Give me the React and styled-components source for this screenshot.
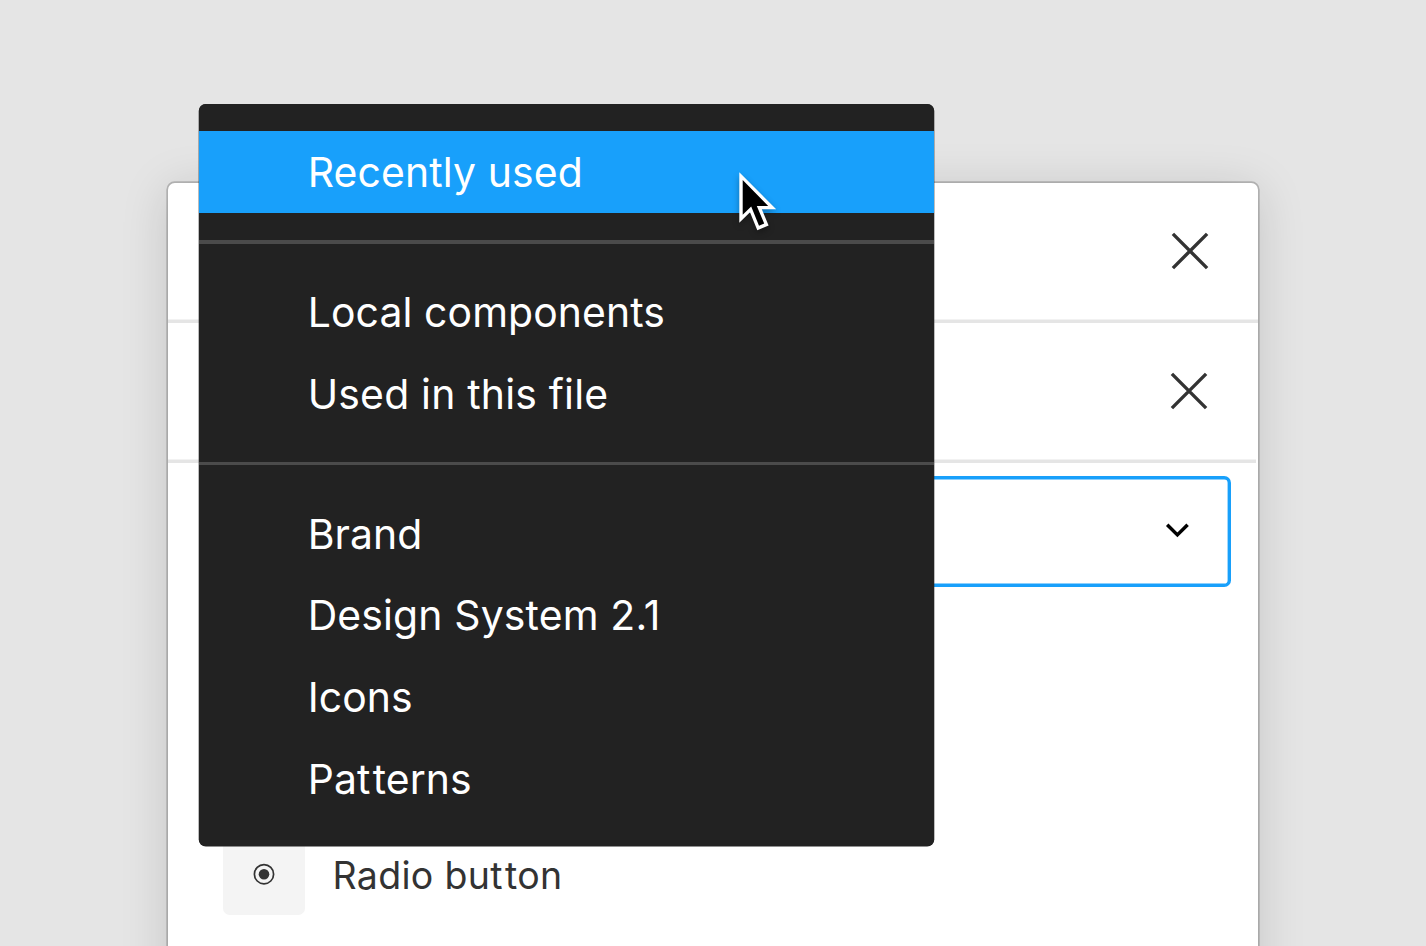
import React from "react";
import styled, { createGlobalStyle } from "styled-components";

const GlobalStyle = createGlobalStyle`
  * { box-sizing: border-box; }
  html, body { margin: 0; padding: 0; background: #e5e5e5; }
  body { overflow: hidden; font-family: Inter, "Liberation Sans", sans-serif; }
`;

const Stage = styled.main`
  position: relative;
  width: 1426px;
  height: 946px;
  overflow: hidden;
  padding: 183.2px 0 0 168.2px;
  background: #e5e5e5;
`;

const Panel = styled.section`
  display: flex;
  flex-direction: column;
  width: 1089.8px;
  height: 1100px;
  background: #fff;
  border-radius: 6.8px;
  box-shadow: 0 0 0 1.7px rgba(0, 0, 0, 0.2), 0 6.8px 47.7px rgba(0, 0, 0, 0.15);
`;

const PanelRow = styled.header`
  display: flex;
  flex: none;
  align-items: center;
  justify-content: flex-end;
  height: 139.7px;
  margin-right: ${(p) => p.$inset || 0}px;
  padding: 0 ${(p) => p.$pad}px 4.4px 0;
  box-shadow: inset 0 -3.4px 0 #e5e5e5;
`;

const Icon = styled.svg`
  display: block;
  flex: none;
`;

const Select = styled.div`
  display: flex;
  flex: none;
  align-items: center;
  justify-content: flex-end;
  height: 110.5px;
  margin: 13.6px 27.3px 0 54.7px;
  padding: 0 41.8px 2.6px 0;
  border-radius: 6.8px;
  box-shadow: inset 0 0 0 3.4px #18a0fb;
`;

const ComponentRow = styled.div`
  display: flex;
  align-items: center;
  gap: 27.6px;
  margin: 246.6px 0 0 54.7px;
`;

const Thumb = styled.div`
  display: flex;
  align-items: center;
  justify-content: center;
  width: 82px;
  height: 82px;
  border-radius: 6.8px;
  background: #f4f4f4;
`;

const ComponentName = styled.span`
  padding-top: 3.4px;
  color: #333;
  font-size: 37.5px;
  line-height: 54.5px;
  letter-spacing: 0.33px;
`;

const Menu = styled.nav`
  position: absolute;
  left: 199px;
  top: 104px;
  width: 735px;
  padding: 27.3px 0 26.2px;
  background: #222;
  border-radius: 6.8px;
  box-shadow: 0 0.3px 0 0.3px #222;
`;

const MenuItem = styled.div`
  height: 81.8px;
  padding-left: 108.7px;
  background: ${(p) => (p.$active ? "#18a0fb" : "transparent")};
  color: #fff;
  font-size: 40.9px;
  line-height: 83.4px;
  letter-spacing: ${(p) => p.$tracking || 0.1}px;
  white-space: nowrap;
`;

const WideT = styled.span`
  letter-spacing: 2.3px;
`;

const Divider = styled.div`
  height: 3.4px;
  margin: 27.3px 0;
  box-shadow: inset 0 0 0 3.4px #4b4b4b;
`;

const Cursor = styled.svg`
  position: absolute;
  left: 730px;
  top: 164px;
  filter: drop-shadow(0 3px 3px rgba(0, 0, 0, 0.3));
`;

const CloseIcon = () => (
  <Icon width="38" height="38" viewBox="0 0 38 38" fill="none" stroke="#333" strokeWidth="3.4">
    <path d="M1.9 1.9 36.1 36.1M36.1 1.9 1.9 36.1" />
  </Icon>
);

const Label = ({ text }) => {
  const at = text.indexOf("tt");
  if (at < 0) return text;
  return (
    <>
      {text.slice(0, at)}
      <WideT>t</WideT>
      {text.slice(at + 1)}
    </>
  );
};

const groups = [
  [{ label: "Recently used", active: true, tracking: 0.13 }],
  [{ label: "Local components" }, { label: "Used in this file", tracking: 0.2 }],
  [
    { label: "Brand" },
    { label: "Design System 2.1", tracking: 0.15 },
    { label: "Icons" },
    { label: "Patterns" },
  ],
];

export default function App() {
  return (
    <>
      <GlobalStyle />
      <Stage>
        <Panel>
          <PanelRow $pad={49}>
            <CloseIcon />
          </PanelRow>
          <PanelRow $pad={47.9} $inset={2}>
            <CloseIcon />
          </PanelRow>
          <Select>
            <Icon width="24" height="16" viewBox="0 0 24 16" fill="none" stroke="#000" strokeWidth="3.5">
              <path d="M2.2 2.7 12.4 12.9 22.6 2.7" />
            </Icon>
          </Select>
          <ComponentRow>
            <Thumb>
              <Icon width="24" height="24" viewBox="0 0 24 24">
                <circle cx="12" cy="12.2" r="9.6" fill="none" stroke="#333" strokeWidth="1.7" />
                <circle cx="12" cy="12.2" r="5.3" fill="#333" />
              </Icon>
            </Thumb>
            <ComponentName>
              <Label text="Radio button" />
            </ComponentName>
          </ComponentRow>
        </Panel>

        <Menu>
          {groups.map((items, i) => (
            <React.Fragment key={items[0].label}>
              {i > 0 && <Divider />}
              {items.map(({ label, active, tracking }) => (
                <MenuItem key={label} $active={active} $tracking={tracking}>
                  <Label text={label} />
                </MenuItem>
              ))}
            </React.Fragment>
          ))}
        </Menu>

        <Cursor width="56" height="76" viewBox="730 164 56 76">
          <path
            d="M739.3 172.3V222.7L750 212.3 757.3 230.3 768.6 225.4 761.8 209.2H776.2Z"
            fill="#fff"
          />
          <path
            d="M742.7 180V214.8L751.2 206.6 759 225.8 764.2 223.4 756.8 205.9H768.2Z"
            fill="#000"
          />
        </Cursor>
      </Stage>
    </>
  );
}
